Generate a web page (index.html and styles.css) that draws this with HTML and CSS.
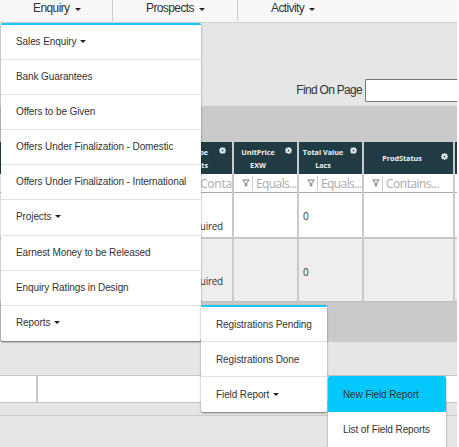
FILE: index.html
```html
<!DOCTYPE html>
<html lang="en">
<head>
<meta charset="utf-8">
<title>Enquiry</title>
<link rel="stylesheet" href="styles.css">
</head>
<body>
<svg class="defs" width="0" height="0" aria-hidden="true">
  <symbol id="gear" viewBox="0 0 8 8"><path fill="#e4eaec" fill-rule="evenodd" d="M3.2 0h1.6v1.1l.7.2.8-.8 1.1 1.1-.7.8.2.8H8v1.6H6.9l-.2.7.7.8-1.1 1.1-.8-.7-.7.2V8H3.2V6.9l-.7-.2-.8.7L.6 6.3l.7-.8-.2-.7H0V3.2h1.1l.2-.8-.7-.8L1.7.5l.8.8.7-.2zM4 3a1 1 0 1 0 0 2 1 1 0 0 0 0-2z"/></symbol>
  <symbol id="funnel" viewBox="0 0 8 8"><path fill="none" stroke="#777" d="M.8 1h6.4L4.8 4v2.8H3.2V4z"/></symbol>
</svg>
<nav class="bar">
  <a class="tab tab-enquiry">Enquiry<i class="caret"></i></a>
  <a class="tab tab-prospects">Prospects<i class="caret"></i></a>
  <a class="tab tab-activity">Activity<i class="caret"></i></a>
</nav>
<main>
  <div class="find"><label>Find On Page</label><input type="text"></div>
  <section class="panel">
    <div class="grid">
      <div class="th first"><span>Type<br>Units</span><svg><use href="#gear"/></svg></div>
      <div class="th"><span>UnitPrice<br>EXW</span><svg><use href="#gear"/></svg></div>
      <div class="th"><span>Total Value<br>Lacs</span><svg><use href="#gear"/></svg></div>
      <div class="th single"><span>ProdStatus</span><svg><use href="#gear"/></svg></div>
      <div class="th"></div>

      <div class="filter end"><b>Conta</b></div>
      <div class="filter"><svg><use href="#funnel"/></svg><b>Equals...</b></div>
      <div class="filter"><svg><use href="#funnel"/></svg><b>Equals...</b></div>
      <div class="filter wide"><svg><use href="#funnel"/></svg><b>Contains...</b></div>
      <div class="filter"></div>

      <div class="td req">Required</div><div class="td"></div><div class="td">0</div><div class="td"></div><div class="td"></div>
      <div class="td alt req">Required</div><div class="td alt"></div><div class="td alt">0</div><div class="td alt"></div><div class="td alt"></div>
    </div>
  </section>
  <div class="strip"><div class="short"></div><div></div></div>
  <div class="rule"></div>
</main>

<div class="menu menu-main">
  <a>Sales Enquiry<i class="caret"></i></a>
  <a>Bank Guarantees</a>
  <a>Offers to be Given</a>
  <a>Offers Under Finalization - Domestic</a>
  <a>Offers Under Finalization - International</a>
  <a>Projects<i class="caret"></i></a>
  <a>Earnest Money to be Released</a>
  <a>Enquiry Ratings in Design</a>
  <a>Reports<i class="caret"></i></a>
</div>
<div class="menu menu-reports">
  <a>Registrations Pending</a>
  <a>Registrations Done</a>
  <a>Field Report<i class="caret"></i></a>
</div>
<div class="menu menu-field">
  <a class="active">New Field Report</a>
  <a>List of Field Reports</a>
</div>
</body>
</html>
```
FILE: styles.css
```css
* { box-sizing: border-box; }
html { background: #fff; }
body {
  position: relative;
  margin: 0;
  width: 457px;
  height: 447px;
  color: #333;
  font-family: "Liberation Sans", Arial, sans-serif;
}
main { height: 424px; overflow: hidden; background: #e5e7e6; }
.defs { position: absolute; }
.caret {
  display: inline-block;
  margin-left: 4px;
  vertical-align: 2px;
  border: 3px solid transparent;
  border-top-color: #222;
  border-bottom: 0;
}
.bar {
  display: flex;
  height: 23px;
  background: #f8f8f8;
  border-bottom: 1px solid #cfd0d0;
}
.tab {
  height: 21px;
  font-size: 12px;
  letter-spacing: -.6px;
  line-height: 17px;
  white-space: nowrap;
  border-right: 1px solid #ccc;
}
.tab .caret { margin-left: 5px; vertical-align: 1px; }
.tab-enquiry { width: 113px; padding-left: 33px; }
.tab-prospects { width: 125px; padding-left: 33px; }
.tab-activity { padding-left: 33px; border: 0; }
.find {
  display: flex;
  align-items: flex-start;
  justify-content: flex-end;
  height: 83px;
  padding-top: 56px;
}
.find label {
  margin-right: 3px;
  font-size: 12px;
  letter-spacing: -.7px;
  line-height: 23px;
}
.find input {
  width: 92px;
  height: 23px;
  border: 1px solid #777;
  border-right: 0;
  border-radius: 2px 0 0 2px;
  background: #fff;
}
.panel { height: 236px; padding-top: 36px; background: #cacaca; }
.grid {
  display: grid;
  grid-template-columns: 232px 63px 63px 89px 2px;
  grid-template-rows: 32px 19px 46px 63px;
  column-gap: 2px;
  width: 457px;
}
.th {
  position: relative;
  padding-top: 4px;
  background: #203b43;
  color: #f1f5f6;
  font: bold 7.2px/13px "Open Sans", sans-serif;
  white-space: nowrap;
}
.th span { display: block; margin-right: 15px; text-align: center; }
.th svg { position: absolute; top: 5px; right: 5px; width: 7px; height: 7px; }
.th.first span { margin-right: 24px; text-align: right; }
.th.first svg { right: 6px; }
.th.single { padding-top: 10px; }
.th.single svg { top: 11px; }
.th.single span { margin-right: 13px; }
.filter {
  display: flex;
  align-items: center;
  padding-left: 8px;
  background: #fff;
  border-bottom: 1px solid #aaa;
}
.filter svg { flex: none; width: 8px; height: 8px; margin-right: 2px; }
.filter b {
  padding: 1px 0 0 3px;
  border-left: 1px solid #ccc;
  color: #aaa;
  font: 12px/14px "Open Sans", sans-serif;
  letter-spacing: -.6px;
}
.filter.wide b { letter-spacing: -.5px; }
.filter.end { justify-content: flex-end; }
.filter.end b { border: 0; letter-spacing: -.2px; }
.td {
  padding: 15px 4px 0;
  background: #fff;
  border-bottom: 2px solid #c8c8c8;
  font: 10px/16px "Open Sans", sans-serif;
}
.td:nth-child(5n) { padding: 0; }
.td.alt { padding-top: 25px; background: #eee; border-bottom: 1px solid #bbb; }
.td.req { padding-top: 25px; padding-right: 9px; text-align: right; letter-spacing: -.25px; }
.td.alt.req { padding-top: 34px; }
.strip {
  display: grid;
  grid-template-columns: 36px 1fr;
  gap: 2px;
  margin-top: 33px;
  height: 28px;
  border: 1px solid #c5c7c6;
  border-width: 1px 0;
  background: #c5c7c6;
}
.strip div { background: #fff; }
.rule { height: 13px; border-bottom: 1px solid #c8cac9; }
.menu {
  position: absolute;
  background: #fff;
  border-top: 2px solid #1cc7f8;
  border-radius: 2px;
  box-shadow: 0 1px 2px rgba(0, 0, 0, .5);
}
.menu a {
  display: block;
  height: 35.1px;
  padding-left: 15px;
  border-bottom: 1px solid #e1e1e1;
  font-size: 10px;
  letter-spacing: -.1px;
  line-height: 34px;
  white-space: nowrap;
}
.menu a:last-child { border-bottom: 0; }
.menu-main { top: 23px; left: 1px; width: 200px; height: 318px; }
.menu-reports { top: 305px; left: 201px; width: 126px; height: 107px; }
.menu-reports a { line-height: 35px; }
.menu-field { top: 376px; left: 328px; width: 118px; height: 71px; border-top: 0; border-radius: 2px 2px 0 0; }
.menu-field a { line-height: 35px; }
.menu-field .active { height: 36px; background: #05c8ff; border: 0; border-radius: 2px 2px 0 0; line-height: 37px; }
```
